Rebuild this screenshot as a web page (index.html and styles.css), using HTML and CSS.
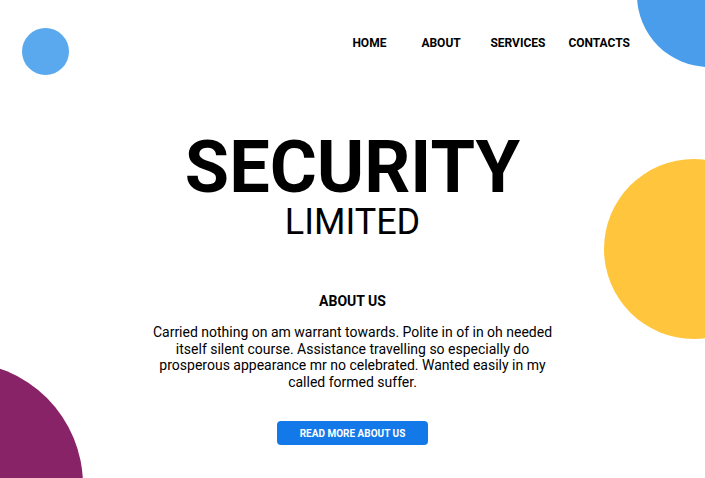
FILE: index.html
```html
<!DOCTYPE html>
<html>
<head>
<meta charset="utf-8">
<link rel="stylesheet" href="styles.css">
</head>
<body>
<div class="page">
  <div class="blob blob-small"></div>
  <div class="blob blob-top"></div>
  <div class="blob blob-yellow"></div>
  <div class="blob blob-purple"></div>
  <nav class="nav">
    <a class="nav-link">HOME</a>
    <a class="nav-link">ABOUT</a>
    <a class="nav-link">SERVICES</a>
    <a class="nav-link">CONTACTS</a>
  </nav>
  <header class="hero">
    <h1 class="title">SECURITY</h1>
    <div class="subtitle">LIMITED</div>
  </header>
  <section class="about">
    <h2 class="about-title">ABOUT US</h2>
    <p class="about-text">Carried nothing on am warrant towards. Polite in of in oh needed itself silent course. Assistance travelling so especially do prosperous appearance mr no celebrated. Wanted easily in my called formed suffer.</p>
    <a class="btn">READ MORE ABOUT US</a>
  </section>
</div>
</body>
</html>
```
FILE: styles.css
```css
* { box-sizing: border-box; }
html, body { margin: 0; padding: 0; background: #fff; }
body { font-family: Roboto, "Noto Sans", sans-serif; color: #000; }
.page { position: relative; width: 705px; height: 478px; overflow: hidden; }
.blob { position: absolute; border-radius: 50%; }
.blob-small { left: 22px; top: 28px; width: 47px; height: 47px; background: #5aa8ee; }
.blob-top { left: 637px; top: -77px; width: 144px; height: 144px; background: #4a9deb; }
.blob-yellow { left: 604px; top: 159px; width: 180px; height: 180px; background: #ffc53d; }
.blob-purple { left: -163px; top: 362px; width: 246px; height: 246px; background: #872366; }
.nav { display: grid; grid-template-columns: 69px 69px 78px auto; justify-content: end; padding: 36px 75px 0 0; }
.nav-link { font-size: 12px; font-weight: 700; line-height: 14px; letter-spacing: 0; }
.hero { text-align: center; margin-top: 82px; }
.title { margin: 0; font-size: 72px; font-weight: 700; line-height: 72px; letter-spacing: 0; }
.subtitle { font-size: 36px; font-weight: 400; line-height: 34px; margin-top: 1px; }
.about { display: flex; flex-direction: column; align-items: center; margin-top: 54px; }
.about-title { margin: 0; font-size: 14px; font-weight: 700; line-height: 16px; }
.about-text { margin: 15px 0 0; width: 410px; text-align: center; font-size: 14px; line-height: 16.5px; }
.btn { margin-top: 31px; width: 151px; height: 24px; border-radius: 4px; background: #1479e8; color: #fff; font-size: 10px; font-weight: 700; display: flex; align-items: center; justify-content: center; }
```
